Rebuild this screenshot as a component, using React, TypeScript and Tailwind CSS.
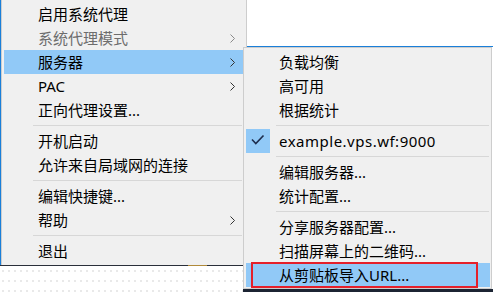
import React from "react";

const FONT = '"Noto Sans", "Noto Sans CJK SC", sans-serif';

function Chevron({ color }: { color: string }) {
  return (
    <svg width="5" height="9" viewBox="0 0 5 9" className="mr-[9px] shrink-0">
      <polyline points="0.5,0.5 4.5,4.5 0.5,8.5" fill="none" stroke={color} strokeWidth="1" />
    </svg>
  );
}

type Item =
  | { sep: true }
  | { sep?: false; label: string; disabled?: boolean; arrow?: boolean; hl?: boolean };

const mainItems: Item[] = [
  { label: "启用系统代理" },
  { label: "系统代理模式", disabled: true, arrow: true },
  { label: "服务器", arrow: true, hl: true },
  { label: "PAC", arrow: true },
  { label: "正向代理设置..." },
  { sep: true },
  { label: "开机启动" },
  { label: "允许来自局域网的连接" },
  { sep: true },
  { label: "编辑快捷键..." },
  { label: "帮助", arrow: true },
  { sep: true },
  { label: "退出" },
];

function MainRow({ item }: { item: Item }) {
  if (item.sep) {
    return (
      <div className="h-[7px] flex items-center">
        <div className="h-px bg-[#d7d7d7] ml-[29px] mr-[2px] flex-1" />
      </div>
    );
  }
  return (
    <div
      className={
        "h-[24px] flex items-center leading-[24px] whitespace-nowrap " +
        (item.hl ? "bg-[#91c9f7]" : "")
      }
    >
      <span
        className={
          "ml-[34px] flex-1 text-[15px] " + (item.disabled ? "text-[#6d6d6d]" : "text-black")
        }
      >
        {item.label}
      </span>
      {item.arrow && <Chevron color={item.disabled ? "#8a8a8a" : "#333333"} />}
    </div>
  );
}

function SubSep() {
  return (
    <div className="h-[7px] flex items-center">
      <div className="h-px bg-[#d7d7d7] ml-[30px] mr-[1px] flex-1" />
    </div>
  );
}

function SubRow({ label, hl, latin }: { label: string; hl?: boolean; latin?: boolean }) {
  return (
    <div
      className={
        "h-[24px] flex items-center leading-[24px] whitespace-nowrap text-[15px] text-black " +
        (hl ? "bg-[#91c9f7]" : "")
      }
    >
      <span className={"ml-[33px] " + (latin ? "tracking-[0.5px]" : "")}>{label}</span>
    </div>
  );
}

export default function App() {
  return (
    <div
      className="relative w-[493px] h-[292px] bg-white overflow-hidden"
      style={{ fontFamily: FONT }}
    >
      {/* main menu with window edge on left */}
      <div className="flex">
        <div className="w-px h-[265px] bg-[#1a7fd9]" />
        <div className="w-[246px] h-[265px] bg-[#f0f0f0] border-x border-[#cdcdcd] p-[2px] flex flex-col">
          {mainItems.map((it, i) => (
            <MainRow key={i} item={it} />
          ))}
        </div>
      </div>
      {/* background window edge under main menu */}
      <div className="flex h-px w-[247px] bg-[#2a2f3a]">
        <div className="w-[188px]" />
        <div className="w-[19px] bg-[#b08a3a]" />
      </div>
      <div className="h-[26px] w-[243px] bg-[radial-gradient(#e9e9e9_0.8px,transparent_0.8px)] bg-[size:6px_10px]" />

      {/* background window title line behind submenu */}
      <div className="absolute left-[247px] top-[46px] w-[246px] h-px bg-[#1a7fd9]" />
      {/* dark strip under submenu */}
      <div className="absolute left-[243px] top-[289px] w-[250px] h-[3px] bg-[#1c2433]" />

      {/* submenu */}
      <div className="absolute left-[243px] top-[47px] w-[249px] h-[242px] bg-[#f0f0f0] border border-[#cdcdcd] pl-[2px] pr-[1px] pt-[2px] pb-[1px] flex flex-col">
        <SubRow label="负载均衡" />
        <SubRow label="高可用" />
        <SubRow label="根据统计" />
        <SubSep />
        <div className="h-[24px] flex items-center leading-[24px] whitespace-nowrap text-[15px] text-black">
          <div className="w-[24px] h-[24px] bg-[#91c9f7] flex items-center justify-center shrink-0">
            <svg width="24" height="24" viewBox="0 0 24 24">
              <polyline
                points="6,10.5 9.8,14.5 17.5,6.5"
                fill="none"
                stroke="#1e2d4d"
                strokeWidth="1.6"
              />
            </svg>
          </div>
          <span className="ml-[9px] tracking-[0.5px]">example.vps.wf:9000</span>
        </div>
        <SubSep />
        <SubRow label="编辑服务器..." />
        <SubRow label="统计配置..." />
        <SubSep />
        <SubRow label="分享服务器配置..." />
        <SubRow label="扫描屏幕上的二维码..." />
        <SubRow label="从剪贴板导入URL..." hl />
      </div>

      {/* red annotation box */}
      <div className="absolute left-[251px] top-[262px] w-[227px] h-[26px] border-2 border-[#e5202a]" />
    </div>
  );
}
